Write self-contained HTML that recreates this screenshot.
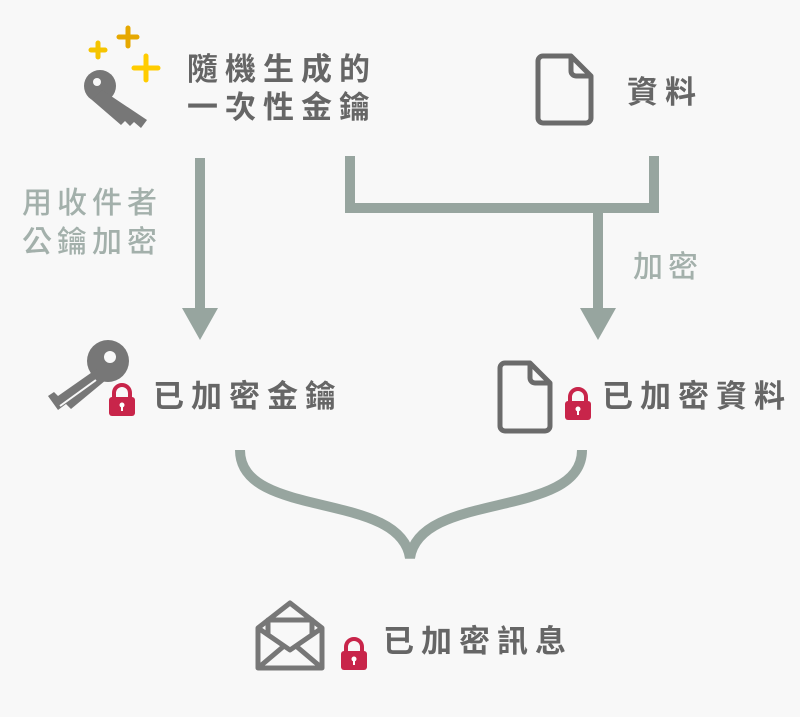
<!DOCTYPE html>
<html><head><meta charset="utf-8"><style>
body{margin:0;width:800px;height:717px;background:#f8f8f8;position:relative;overflow:hidden;font-family:"Liberation Sans","Noto Sans CJK TC",sans-serif}
.t{position:absolute;color:#666;font-size:31px;font-weight:bold;letter-spacing:7px;line-height:38px;white-space:nowrap}
.g{position:absolute;color:#a3b0ab;font-size:30px;font-weight:500;letter-spacing:5px;line-height:38px;white-space:nowrap}
svg{position:absolute;left:0;top:0}
</style></head><body>
<svg width="800" height="717">
<g stroke="#97a59f" stroke-width="10" fill="none">
<line x1="200" y1="158" x2="200" y2="312"/>
<polyline points="350,156 350,208 654,208 654,156"/>
<line x1="598" y1="208" x2="598" y2="312"/>
<path d="M240,450 C240,520 400,490 410,558 C420,490 582,520 582,450"/>
</g>
<polygon points="182,308 218,308 200,340" fill="#97a59f"/>
<polygon points="580,308 616,308 598,340" fill="#97a59f"/>
<g stroke-linecap="round" stroke-width="5">
<path d="M128,28v18M119,37h18" stroke="#e6a800"/>
<path d="M98,43v14M91,50h14" stroke="#f5c400"/>
<path d="M146,56v24M134,68h24" stroke="#ffcc00"/>
</g>
<g fill="#777">
<circle cx="100" cy="86" r="16"/>
<path d="M102,90 L147,120 L141,128 L134,122 L130,126 L125,121 L121,125 L92,100Z"/>
</g>
<circle cx="97" cy="82" r="4" fill="#f8f8f8"/>
<path d="M543,56 h28 l20,20 v42 a5,5 0 0 1 -5,5 h-43 a5,5 0 0 1 -5,-5 v-57 a5,5 0 0 1 5,-5z M571,56 v15 a5,5 0 0 0 5,5 h15" fill="none" stroke="#6b6b6b" stroke-width="5" stroke-linejoin="round"/>
<g fill="#777">
<circle cx="108" cy="361" r="21"/>
<path d="M98,368 L58,396 L54,392 L48,396 L58,410 L66,404 L71,409 L106,380Z"/>
</g>
<circle cx="110" cy="357" r="6" fill="#f8f8f8"/>
<line x1="60" y1="406" x2="96" y2="380" stroke="#f8f8f8" stroke-width="2"/>
<path d="M505,363 h25 l20,20 v43 a5,5 0 0 1 -5,5 h-40 a5,5 0 0 1 -5,-5 v-58 a5,5 0 0 1 5,-5z M530,363 v15 a5,5 0 0 0 5,5 h15" fill="none" stroke="#6b6b6b" stroke-width="5" stroke-linejoin="round"/>
<g fill="none" stroke="#777" stroke-width="5" stroke-linejoin="round">
<path d="M258,628 v40 h64 v-40 l-32,-25z"/>
<path d="M268,636 v-16 h44 v16"/>
<path d="M258,628 l32,22 l32,-22 M258,668 l26,-22 M322,668 l-26,-22"/>
</g>
<g id="lk">
<path d="M114,398 v-5 a8,8 0 0 1 16,0 v5" fill="none" stroke="#c8254a" stroke-width="4"/>
<rect x="109" y="397" width="26" height="19" rx="3" fill="#c8254a"/>
<circle cx="122" cy="405" r="2.5" fill="#fff"/><rect x="121" y="405" width="2" height="6" fill="#fff"/>
</g>
<use href="#lk" x="456" y="4"/>
<use href="#lk" x="232" y="254"/>
</svg>
<div class="t" style="left:187px;top:51px">隨機生成的</div>
<div class="t" style="left:187px;top:89px">一次性金鑰</div>
<div class="t" style="left:627px;top:74px">資料</div>
<div class="g" style="left:22px;top:185px">用收件者</div>
<div class="g" style="left:22px;top:224px">公鑰加密</div>
<div class="g" style="left:633px;top:249px">加密</div>
<div class="t" style="left:153px;top:378px">已加密金鑰</div>
<div class="t" style="left:602px;top:378px">已加密資料</div>
<div class="t" style="left:383px;top:623px">已加密訊息</div>
</body></html>
